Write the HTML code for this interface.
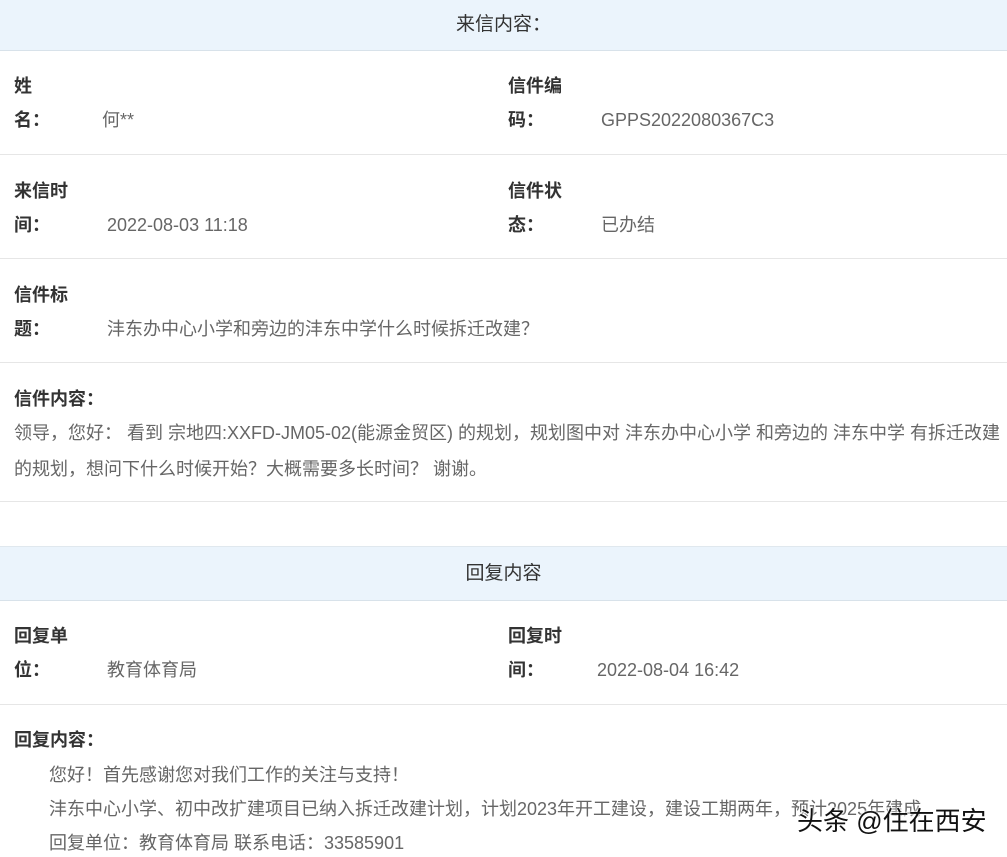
<html><head><style>
body{margin:0;width:1007px;height:857px;background:#fff;position:relative;overflow:hidden;font-family:"Liberation Sans","Noto Sans CJK SC",sans-serif;font-size:18px;color:#666}
div{position:absolute;line-height:22px;white-space:nowrap}
.b{font-weight:bold;color:#333}
.hd{left:0;width:1007px;background:#ebf4fc;border-bottom:1px solid #d8e2ea;text-align:center;color:#333;font-size:19px}
.ln{left:0;width:1007px;height:1px;background:#e6e6e6}
</style></head><body>
<div class="hd" style="top:0;height:50px;line-height:50px">来信内容：</div>
<div class="b" style="left:14px;top:75px">姓</div>
<div class="b" style="left:14px;top:109px">名：</div>
<div style="left:102px;top:109px">何**</div>
<div class="b" style="left:508px;top:75px">信件编</div>
<div class="b" style="left:508px;top:109px">码：</div>
<div style="left:601px;top:109px">GPPS2022080367C3</div>
<div class="ln" style="top:154px"></div>
<div class="b" style="left:14px;top:180px">来信时</div>
<div class="b" style="left:14px;top:214px">间：</div>
<div style="left:107px;top:214px">2022-08-03 11:18</div>
<div class="b" style="left:508px;top:180px">信件状</div>
<div class="b" style="left:508px;top:214px">态：</div>
<div style="left:601px;top:214px">已办结</div>
<div class="ln" style="top:258px"></div>
<div class="b" style="left:14px;top:284px">信件标</div>
<div class="b" style="left:14px;top:318px">题：</div>
<div style="left:107px;top:318px">沣东办中心小学和旁边的沣东中学什么时候拆迁改建？</div>
<div class="ln" style="top:362px"></div>
<div class="b" style="left:14px;top:388px">信件内容：</div>
<div style="left:14px;top:422px">领导，您好： 看到 宗地四:XXFD-JM05-02(能源金贸区) 的规划，规划图中对 沣东办中心小学 和旁边的 沣东中学 有拆迁改建</div>
<div style="left:14px;top:458px">的规划，想问下什么时候开始？大概需要多长时间？ 谢谢。</div>
<div class="ln" style="top:501px"></div>
<div class="hd" style="top:546px;height:53px;line-height:53px;border-top:1px solid #e0e8ee">回复内容</div>
<div class="b" style="left:14px;top:625px">回复单</div>
<div class="b" style="left:14px;top:659px">位：</div>
<div style="left:107px;top:659px">教育体育局</div>
<div class="b" style="left:508px;top:625px">回复时</div>
<div class="b" style="left:508px;top:659px">间：</div>
<div style="left:597px;top:659px">2022-08-04 16:42</div>
<div class="ln" style="top:704px"></div>
<div class="b" style="left:14px;top:729px">回复内容：</div>
<div style="left:49px;top:764px">您好！首先感谢您对我们工作的关注与支持！</div>
<div style="left:49px;top:798px">沣东中心小学、初中改扩建项目已纳入拆迁改建计划，计划2023年开工建设，建设工期两年，预计2025年建成</div>
<div style="left:49px;top:832px">回复单位：教育体育局 联系电话：33585901</div>
<div style="left:797px;top:806px;font-size:26px;line-height:30px;color:#111;text-shadow:0 0 2px #fff,0 0 2px #fff,0 0 3px #fff">头条 @住在西安</div>
</body></html>
